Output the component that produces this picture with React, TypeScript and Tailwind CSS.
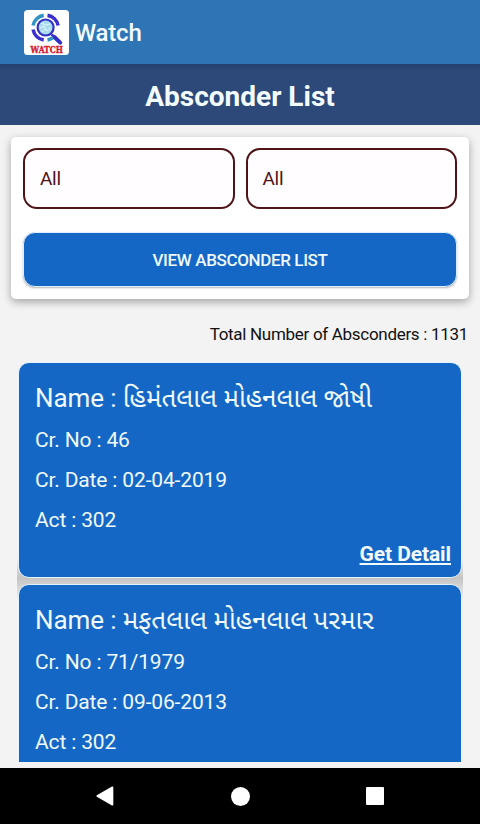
import React from "react";

type Absconder = { name: string; crNo: string; crDate: string; act: string; action?: string };

const absconders: Absconder[] = [
  { name: "હિમંતલાલ મોહનલાલ જોષી", crNo: "46", crDate: "02-04-2019", act: "302", action: "Get Detail" },
  { name: "મફતલાલ મોહનલાલ પરમાર", crNo: "71/1979", crDate: "09-06-2013", act: "302" },
];

function Logo() {
  return (
    <svg width="45" height="45" viewBox="0 0 45 45" aria-label="Watch logo">
      <rect width="45" height="45" rx="3.5" fill="#fff" />
      <g fill="none" strokeWidth="3.6">
        <path d="M9.1 15.5A12.6 12.6 0 0 1 19.7 5.4" stroke="#2f93c4" />
        <path d="M23.5 5.4A12.6 12.6 0 0 1 34.1 15.5" stroke="#3a2fcf" />
        <path d="M9.1 19.5A12.6 12.6 0 0 0 19.7 29.9" stroke="#3a2fcf" />
        <path d="M23.5 29.9A12.6 12.6 0 0 0 28.6 27.8" stroke="#2f93c4" />
      </g>
      <circle cx="21.6" cy="17.5" r="8" fill="#a9dbee" stroke="#3230c4" strokeWidth="2.2" />
      <path d="M17 13l5 2 4-1M16 18l4-2 3 5 4-3M18 22l3-3" stroke="#e2f6fb" fill="none" />
      <path d="M27.5 24.3l3 2.8" stroke="#3230c4" strokeWidth="2.5" />
      <path d="M30.6 27.2l5.6 5.4" stroke="#3230c4" strokeWidth="4" strokeLinecap="round" />
      <text x="6.6" y="42.6" textLength="32.4" lengthAdjust="spacingAndGlyphs" fill="#d3202c" stroke="#d3202c" strokeWidth=".4" className="font-['DejaVu_Serif',serif] text-[9px] font-bold">WATCH</text>
    </svg>
  );
}

function Card({ item }: { item: Absconder }) {
  return (
    <article className="flex h-[216px] shrink-0 flex-col rounded-[11px] border border-[#e3f3ff] bg-[#1567c5] pl-[16px] pr-[10px] pt-[15px] text-[#f0faff]">
      <h2 className="h-[42px] whitespace-nowrap text-[26px] leading-[40px] tracking-[-0.12px]">
        Name : <span className="text-[26px] tracking-normal">{item.name}</span>
      </h2>
      <div className="text-[21px] leading-[40px] tracking-[-0.15px]">
        <p>Cr. No : {item.crNo}</p>
        <p>Cr. Date : {item.crDate}</p>
        <p>Act : {item.act}</p>
      </div>
      {item.action && (
        <a className="-mt-[3px] self-end text-[21px] font-bold leading-[34px] tracking-[-0.1px] underline decoration-[1.5px] underline-offset-2">{item.action}</a>
      )}
    </article>
  );
}

export default function App() {
  return (
    <div className="flex h-[824px] w-[480px] flex-col overflow-hidden bg-[#f3f3f3] font-[Roboto,'Noto_Sans_Gujarati','Noto_Sans',sans-serif]">
      <header className="flex h-[64px] shrink-0 items-center bg-[#2e75b6] pl-[24px]">
        <Logo />
        <span className="ml-[6px] pt-[2px] text-[24px] font-medium tracking-[-0.2px] text-[#f3faff]">Watch</span>
      </header>
      <div className="flex h-[61px] shrink-0 items-center justify-center bg-[#2d4979] bg-linear-to-b from-[#24406e] to-[#2d4979] to-[6px] pt-[4px]">
        <h1 className="text-[28px] font-bold text-[#f3fdff]">Absconder List</h1>
      </div>
      <section className="mx-[11px] mt-[12px] flex h-[162px] shrink-0 flex-col rounded-[5px] bg-white px-[12px] pt-[11px] shadow-[0_3px_8px_rgba(0,0,0,0.33)]">
        <div className="flex gap-[11px]">
          <div className="flex h-[61px] flex-1 items-center rounded-[14px] border-2 border-[#501317] bg-[#fffdff] pl-[15px] pt-[2px] text-[19px] tracking-[-0.3px] text-[#501317]">All</div>
          <div className="flex h-[61px] flex-1 items-center rounded-[14px] border-2 border-[#501317] bg-[#fffdff] pl-[15px] pt-[2px] text-[19px] tracking-[-0.3px] text-[#501317]">All</div>
        </div>
        <button className="mt-[23px] h-[55px] rounded-[12px] border border-[#dceeff] bg-[#1567c5] pt-[2px] text-[17px] font-medium tracking-[-0.37px] text-[#eefaff] shadow-[0_1px_2px_rgba(0,0,0,0.3)]">VIEW ABSCONDER LIST</button>
      </section>
      <p className="mr-[12px] mt-[23px] h-[24px] shrink-0 text-right text-[17px] leading-[24px] tracking-[-0.3px] text-[#111]">Total Number of Absconders : 1131</p>
      <main className="mx-[17px] mt-[16px] flex h-[400px] shrink-0 flex-col overflow-hidden">
        <div className="flex flex-col gap-[6px] bg-linear-to-b from-[#f3f3f3] from-[195px] via-[#c4c4c4] via-[216px] to-[#f3f3f3] to-[240px] px-px">
          {absconders.map((item) => (
            <Card key={item.name} item={item} />
          ))}
        </div>
      </main>
      <nav className="mt-auto flex h-[56px] shrink-0 items-center justify-between bg-black px-[96px]">
        <svg width="18" height="20" viewBox="0 0 18 20" fill="#fff"><path d="M.8 9.2Q0 10 .8 10.8L16 19.4Q17.3 20 17.3 18.5V1.5Q17.3 0 16 .6Z" /></svg>
        <span className="size-[19px] rounded-full bg-white" />
        <span className="size-[18px] rounded-[1px] bg-white" />
      </nav>
    </div>
  );
}
